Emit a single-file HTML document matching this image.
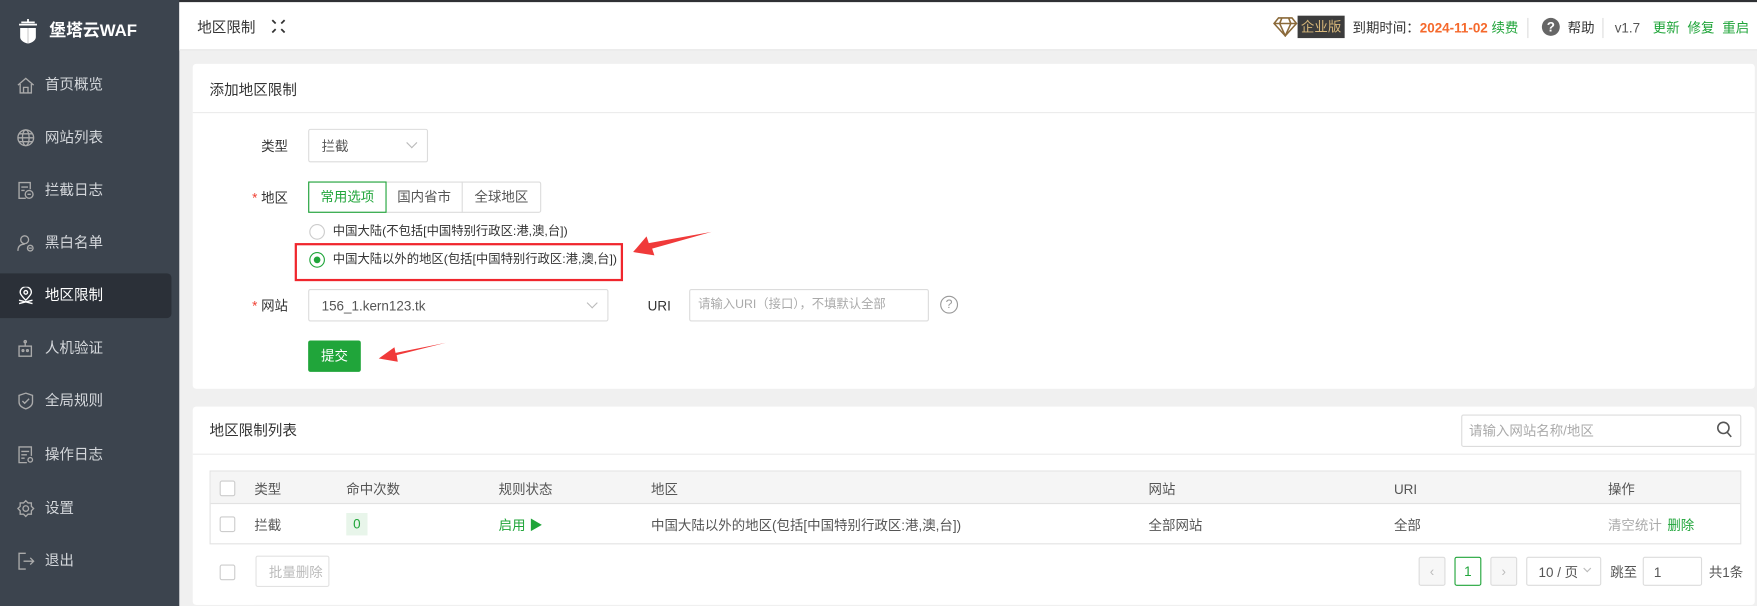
<!DOCTYPE html>
<html><head><meta charset="utf-8"><style>
*{box-sizing:border-box;margin:0;padding:0}
html,body{width:1757px;height:606px;overflow:hidden;background:#f0f0f0}
#w{position:absolute;left:0;top:0;width:1568px;height:541px;transform:scale(1.12054,1.12015);transform-origin:0 0;font-family:"Liberation Sans","Noto Sans CJK SC",sans-serif;font-size:12px;color:#333;line-height:1.6}
.a{position:absolute;white-space:nowrap}
#sb{position:absolute;left:0;top:0;width:160px;height:541px;background:#3c444e}
.mi{position:absolute;left:0;width:153px;height:40px;color:#d4d7db;font-size:13px;line-height:40px;padding-left:40px}
.mi svg{position:absolute;left:15px;top:12px}
.act{background:#2b3038;border-radius:0 4px 4px 0;color:#fff}
.box{position:absolute;border:1px solid #dcdcdc;border-radius:2px;background:#fff}
.card{position:absolute;background:#fff;border-radius:3px}
.g{color:#20a53a}
.lbl{position:absolute;text-align:right;width:80px;font-size:12px;line-height:1.6}
.chk{position:absolute;width:14px;height:14px;border:1px solid #ccc;border-radius:2px;background:#fff}
.chev{position:absolute;width:7px;height:7px;border-right:1px solid #bbb;border-bottom:1px solid #bbb;transform:rotate(45deg)}
</style></head><body><div id="w">
<div class="a" style="left:0;top:0;width:1568px;height:2px;background:#2f3134"></div>
<div id="sb">
 <svg class="a" style="left:15px;top:17px" width="20" height="22" viewBox="0 0 20 22"><path d="M2 5h16M4 3h12M10 0v3" stroke="#fff" stroke-width="1.6"/><path d="M3 8h14v8q0 4-7 6q-7-2-7-6z" fill="#fff"/><path d="M10 8v14" stroke="#ccc"/></svg>
 <div class="a" style="left:44px;top:16px;color:#fff;font-size:15px;font-weight:bold">堡塔云WAF</div>
 <div class="mi" style="top:56px"><svg width="16" height="16" viewBox="0 0 16 16" fill="none" stroke="#aaa" stroke-width="1.2"><path d="M1 8L8 2l7 6M3 7v8h10V7M6 15v-5h4v5"/></svg>首页概览</div>
 <div class="mi" style="top:103px"><svg width="16" height="16" viewBox="0 0 16 16" fill="none" stroke="#aaa" stroke-width="1.2"><circle cx="8" cy="8" r="7"/><ellipse cx="8" cy="8" rx="3" ry="7"/><path d="M1 8h14M2 4.5h12M2 11.5h12"/></svg>网站列表</div>
 <div class="mi" style="top:150px"><svg width="16" height="16" viewBox="0 0 16 16" fill="none" stroke="#aaa" stroke-width="1.2"><path d="M8 15H2V1h10v6M4 5h6M4 8h3"/><circle cx="11" cy="11.5" r="3.5"/><path d="M9.5 11.5h3"/></svg>拦截日志</div>
 <div class="mi" style="top:197px"><svg width="16" height="16" viewBox="0 0 16 16" fill="none" stroke="#aaa" stroke-width="1.2"><circle cx="7" cy="5" r="3.5"/><path d="M1 15q0-6 6-6"/><circle cx="12" cy="12.5" r="2.5"/><path d="M10.5 12.5h3"/></svg>黑白名单</div>
 <div class="mi act" style="top:244px"><svg width="16" height="16" viewBox="0 0 16 16" fill="none" stroke="#fff" stroke-width="1.2"><path d="M8 12Q3 7 3 5a5 5 0 0110 0q0 2-5 7z"/><circle cx="8" cy="5" r="1.6"/><path d="M2 15l12-3M2 12l12 3"/></svg>地区限制</div>
 <div class="mi" style="top:291px"><svg width="16" height="16" viewBox="0 0 16 16" fill="none" stroke="#aaa" stroke-width="1.2"><rect x="2" y="6" width="11" height="9"/><path d="M7.5 6V2"/><circle cx="7.5" cy="2" r="1"/><circle cx="5.5" cy="10" r=".8"/><circle cx="9.5" cy="10" r=".8"/></svg>人机验证</div>
 <div class="mi" style="top:338px"><svg width="16" height="16" viewBox="0 0 16 16" fill="none" stroke="#aaa" stroke-width="1.2"><path d="M8 1l6 2v6q0 4-6 6q-6-2-6-6V3z"/><path d="M5 8l2 2 4-4"/></svg>全局规则</div>
 <div class="mi" style="top:386px"><svg width="16" height="16" viewBox="0 0 16 16" fill="none" stroke="#aaa" stroke-width="1.2"><path d="M9 15H2V1h11v8M4 5h7M4 8h5M4 11h3"/><circle cx="12" cy="12.5" r="2"/></svg>操作日志</div>
 <div class="mi" style="top:434px"><svg width="16" height="16" viewBox="0 0 16 16" fill="none" stroke="#aaa" stroke-width="1.2"><path d="M8 1l2 2h3v3l2 2-2 2v3h-3l-2 2-2-2H3v-3L1 8l2-2V3h3z"/><circle cx="8" cy="8" r="2.5"/></svg>设置</div>
 <div class="mi" style="top:481px"><svg width="16" height="16" viewBox="0 0 16 16" fill="none" stroke="#aaa" stroke-width="1.2"><path d="M8 1H2v14h6M6 8h9M12 5l3 3-3 3"/></svg>退出</div>
</div>
<div class="a" style="left:160px;top:2px;width:1408px;height:43px;background:#fff;border-bottom:1px solid #e4e4e4"></div>
<div class="a" style="left:176px;top:15px;font-size:13px">地区限制</div>
<svg class="a" style="left:242px;top:17px" width="13" height="13" viewBox="0 0 13 13" fill="none" stroke="#333" stroke-width="1.6"><path d="M1 1l3 3M12 1L9 4M1 12l3-3M12 12L9 9"/></svg>
<svg class="a" style="left:1136px;top:15px" width="22" height="18" viewBox="0 0 22 18" fill="none" stroke="#8b6a3a" stroke-width="1.4"><path d="M5 1h12l4 5-10 11L1 6zM1 6h20M8 1l-2 5 5 11 5-11-2-5"/></svg>
<div class="a" style="left:1158px;top:14px;width:42px;height:20px;background:#3c3c3c;color:#d7b77a;font-size:12px;line-height:20px;text-align:center">企业版</div>
<div class="a" style="left:1207px;top:16px">到期时间：<b style="color:#f5692c">2024-11-02</b></div>
<div class="a g" style="left:1331px;top:16px">续费</div>
<div class="a" style="left:1363px;top:16px;width:1px;height:18px;background:#ddd"></div>
<div class="a" style="left:1376px;top:16px;width:16px;height:16px;border-radius:50%;background:#666;color:#fff;font-weight:bold;font-size:12px;line-height:16px;text-align:center">?</div>
<div class="a" style="left:1399px;top:16px">帮助</div>
<div class="a" style="left:1430px;top:16px;width:1px;height:18px;background:#ddd"></div>
<div class="a" style="left:1441px;top:16px;color:#555">v1.7</div>
<div class="a g" style="left:1475px;top:16px">更新</div>
<div class="a g" style="left:1506px;top:16px">修复</div>
<div class="a g" style="left:1537px;top:16px">重启</div>

<div class="card" style="left:172px;top:57px;width:1394px;height:290px">
 <div class="a" style="left:0;top:43px;width:1394px;height:1px;background:#ececec"></div>
</div>
<div class="a" style="left:187px;top:71px;font-size:13px">添加地区限制</div>
<div class="lbl" style="left:177px;top:122px">类型</div>
<div class="box" style="left:275px;top:115px;width:107px;height:30px"></div>
<div class="a" style="left:287px;top:122px;color:#555">拦截</div>
<div class="chev" style="left:364px;top:124px"></div>
<div class="lbl" style="left:177px;top:168px"><span style="color:#f04134">* </span>地区</div>
<div class="box" style="left:275px;top:162px;width:208px;height:28px"></div>
<div class="a" style="left:275px;top:162px;width:70px;height:28px;border:1px solid #20a53a;color:#20a53a;text-align:center;line-height:26px">常用选项</div>
<div class="a" style="left:345px;top:162px;width:67px;height:28px;text-align:center;line-height:28px;color:#555">国内省市</div>
<div class="a" style="left:412px;top:162px;width:1px;height:28px;background:#dcdcdc"></div>
<div class="a" style="left:412px;top:162px;width:71px;height:28px;text-align:center;line-height:28px;color:#555">全球地区</div>
<div class="a" style="left:276px;top:200px;width:14px;height:14px;border:1px solid #ccc;border-radius:50%"></div>
<div class="a" style="left:297px;top:199px;font-size:11px">中国大陆(不包括[中国特别行政区:港,澳,台])</div>
<div class="a" style="left:276px;top:225px;width:14px;height:14px;border:1px solid #20a53a;border-radius:50%"><div style="margin:3px;width:6px;height:6px;border-radius:50%;background:#20a53a"></div></div>
<div class="a" style="left:297px;top:224px;font-size:11px">中国大陆以外的地区(包括[中国特别行政区:港,澳,台])</div>
<div class="a" style="left:263px;top:217px;width:293px;height:34px;border:2px solid #f0262d"></div>
<svg class="a" style="left:560px;top:200px" width="80" height="32" viewBox="0 0 80 32"><path d="M75 7L22 22l2 6L5 25l12-14 2 6z" fill="#f03a3a"/></svg>
<div class="lbl" style="left:177px;top:264px"><span style="color:#f04134">* </span>网站</div>
<div class="box" style="left:275px;top:258px;width:268px;height:29px"></div>
<div class="a" style="left:287px;top:264px;color:#555">156_1.kern123.tk</div>
<div class="chev" style="left:525px;top:267px"></div>
<div class="a" style="left:578px;top:264px">URI</div>
<div class="box" style="left:615px;top:258px;width:214px;height:29px"></div>
<div class="a" style="left:623px;top:264px;color:#aaa;font-size:11px">请输入URI（接口），不填默认全部</div>
<div class="a" style="left:839px;top:264px;width:16px;height:16px;border:1px solid #999;border-radius:50%;color:#999;font-size:11px;line-height:14px;text-align:center">?</div>
<div class="a" style="left:275px;top:304px;width:47px;height:28px;background:#20a53a;border-radius:2px;color:#fff;text-align:center;line-height:28px">提交</div>
<svg class="a" style="left:332px;top:300px" width="70" height="30" viewBox="0 0 70 30"><path d="M66 6L22 17l1 6L6 20l14-10 1 5z" fill="#f03a3a"/></svg>

<div class="card" style="left:172px;top:363px;width:1394px;height:177px">
 <div class="a" style="left:0;top:42px;width:1394px;height:1px;background:#ececec"></div>
</div>
<div class="a" style="left:187px;top:375px;font-size:13px">地区限制列表</div>
<div class="box" style="left:1304px;top:370px;width:250px;height:29px"></div>
<div class="a" style="left:1311px;top:376px;color:#aaa">请输入网站名称/地区</div>
<svg class="a" style="left:1532px;top:376px" width="14" height="15" viewBox="0 0 14 15" fill="none" stroke="#555" stroke-width="1.4"><circle cx="6" cy="6" r="5"/><path d="M9.5 10l3.5 4"/></svg>
<div class="a" style="left:187px;top:420px;width:1367px;height:66px;border:1px solid #e2e2e2"></div>
<div class="a" style="left:188px;top:421px;width:1365px;height:29px;background:#f5f5f5;border-bottom:1px solid #e2e2e2"></div>
<div class="chk" style="left:196px;top:429px"></div>
<div class="a" style="left:227px;top:428px;color:#555">类型</div>
<div class="a" style="left:309px;top:428px;color:#555">命中次数</div>
<div class="a" style="left:445px;top:428px;color:#555">规则状态</div>
<div class="a" style="left:581px;top:428px;color:#555">地区</div>
<div class="a" style="left:1025px;top:428px;color:#555">网站</div>
<div class="a" style="left:1244px;top:428px;color:#555">URI</div>
<div class="a" style="left:1435px;top:428px;color:#555">操作</div>
<div class="chk" style="left:196px;top:461px"></div>
<div class="a" style="left:227px;top:460px;color:#555">拦截</div>
<div class="a" style="left:309px;top:458px;width:19px;height:20px;background:#e8f5ea;color:#20a53a;text-align:center;line-height:20px">0</div>
<div class="a g" style="left:445px;top:460px">启用 ▶</div>
<div class="a" style="left:581px;top:460px;color:#555">中国大陆以外的地区(包括[中国特别行政区:港,澳,台])</div>
<div class="a" style="left:1025px;top:460px;color:#555">全部网站</div>
<div class="a" style="left:1244px;top:460px;color:#555">全部</div>
<div class="a" style="left:1435px;top:460px;color:#aaa">清空统计</div>
<div class="a g" style="left:1488px;top:460px">删除</div>
<div class="chk" style="left:196px;top:504px"></div>
<div class="box" style="left:228px;top:496px;width:66px;height:28px;border-color:#e2e2e2"></div>
<div class="a" style="left:240px;top:502px;color:#bbb">批量删除</div>
<div class="box" style="left:1266px;top:497px;width:24px;height:26px;background:#f7f7f7;color:#bbb;text-align:center;line-height:24px">‹</div>
<div class="box" style="left:1298px;top:497px;width:24px;height:26px;border-color:#20a53a;color:#20a53a;text-align:center;line-height:24px">1</div>
<div class="box" style="left:1330px;top:497px;width:24px;height:26px;background:#f7f7f7;color:#bbb;text-align:center;line-height:24px">›</div>
<div class="box" style="left:1362px;top:497px;width:67px;height:26px"></div>
<div class="a" style="left:1373px;top:502px;color:#555">10 / 页</div>
<div class="chev" style="left:1414px;top:505px;width:5px;height:5px"></div>
<div class="a" style="left:1437px;top:502px;color:#555">跳至</div>
<div class="box" style="left:1466px;top:497px;width:53px;height:26px"></div>
<div class="a" style="left:1476px;top:502px;color:#555">1</div>
<div class="a" style="left:1525px;top:502px;color:#555">共1条</div>
</div></body></html>
